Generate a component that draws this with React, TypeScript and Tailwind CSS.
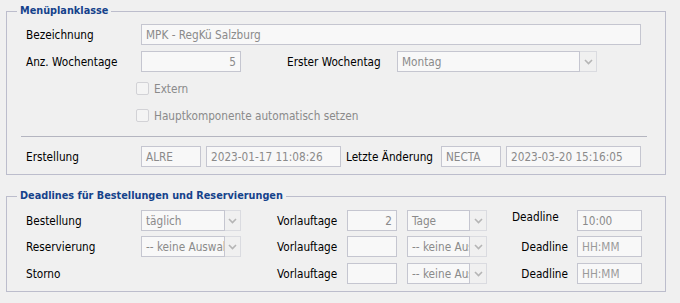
import React from "react";

const font = "[font-family:'DejaVu_Sans_Condensed','Liberation_Sans',sans-serif]";

function Field({ value, w, right, placeholder }: { value?: string; w: string; right?: boolean; placeholder?: boolean }) {
  return (
    <div
      className={`${w} h-[21px] shrink-0 border border-[#c5c6d0] bg-[#f8f8f8] flex items-center px-[4px] overflow-hidden whitespace-nowrap text-[#8a8a8a] ${right ? "justify-end" : ""} ${placeholder ? "text-[#9a9a9a]" : ""}`}
    >
      {value}
    </div>
  );
}

function Select({ value, w, trigger = "w-[17px]" }: { value: string; w: string; trigger?: string }) {
  return (
    <div className={`${w} h-[21px] shrink-0 flex`}>
      <div className="flex-1 min-w-0 border border-[#c5c6d0] bg-[#f8f8f8] flex items-center px-[4px] overflow-hidden whitespace-nowrap text-[#8a8a8a]">
        {value}
      </div>
      <div className={`${trigger} shrink-0 border border-l-0 border-[#dadbe0] bg-[#f0f0f0] flex items-center justify-center`}>
        <svg width="9" height="6" viewBox="0 0 9 6">
          <path d="M1 1 L4.5 4.5 L8 1" fill="none" stroke="#b5b5b5" strokeWidth="1.6" />
        </svg>
      </div>
    </div>
  );
}

function Check({ label }: { label: string }) {
  return (
    <div className="h-[21px] flex items-center pl-[110px] text-[#8a8a8a]">
      <div className="w-[13px] h-[13px] rounded-[2px] border border-[#d2d2d6] bg-[#f4f4f4] mr-[5px]" />
      {label}
    </div>
  );
}

export default function App() {
  return (
    <div className={`w-[680px] h-[303px] bg-[#f0f0f0] text-[11.7px] leading-[14px] text-black pl-[6px] pt-[3px] ${font}`}>
      {/* Menüplanklasse */}
      <fieldset className="w-[660px] border border-[#bcbdcc] pb-[7px]">
        <legend className="ml-[10px] px-[3px] font-bold text-[10.8px] text-[#15428b] leading-[16px]">Menüplanklasse</legend>
        <div className="flex flex-col gap-[6px] pt-[5px] pl-[19px]">
          <div className="flex items-center h-[21px]">
            <div className="w-[115px]">Bezeichnung</div>
            <Field value="MPK - RegKü Salzburg" w="w-[500px]" />
          </div>
          <div className="flex items-center h-[21px]">
            <div className="w-[115px]">Anz. Wochentage</div>
            <Field value="5" w="w-[100px]" right />
            <div className="w-[110px] ml-[46px]">Erster Wochentag</div>
            <Select value="Montag" w="w-[200px]" />
          </div>
          <Check label="Extern" />
          <Check label="Hauptkomponente automatisch setzen" />
        </div>
        <div className="ml-[14px] w-[626px] h-px bg-[#b4b5c0] mt-[10px] mb-[9px]" />
        <div className="flex items-center h-[21px] pl-[19px]">
          <div className="w-[115px]">Erstellung</div>
          <Field value="ALRE" w="w-[60px]" />
          <Field value="2023-01-17 11:08:26" w="w-[135px] ml-[5px]" />
          <div className="w-[95px] ml-[5px]">Letzte Änderung</div>
          <Field value="NECTA" w="w-[60px]" />
          <Field value="2023-03-20 15:16:05" w="w-[135px] ml-[5px]" />
        </div>
      </fieldset>

      {/* Deadlines */}
      <fieldset className="w-[660px] border border-[#bcbdcc] pb-[7px] mt-[13px]">
        <legend className="ml-[10px] px-[3px] font-bold text-[10.8px] text-[#15428b] leading-[16px]">
          Deadlines für Bestellungen und Reservierungen
        </legend>
        <div className="flex flex-col pt-[6px] pl-[19px]">
          <div className="flex items-center h-[21px]">
            <div className="w-[115px]">Bestellung</div>
            <Select value="täglich" w="w-[100px]" trigger="w-[16px]" />
            <div className="w-[70px] ml-[36px]">Vorlauftage</div>
            <Field value="2" w="w-[50px]" right />
            <Select value="Tage" w="w-[80px] ml-[10px]" />
            <div className="w-[65px] ml-[25px] self-start">Deadline</div>
            <Field value="10:00" w="w-[65px]" />
          </div>
          <div className="flex items-center h-[21px] mt-[5px]">
            <div className="w-[115px]">Reservierung</div>
            <Select value="-- keine Auswahl --" w="w-[100px]" trigger="w-[16px]" />
            <div className="w-[70px] ml-[36px]">Vorlauftage</div>
            <Field w="w-[50px]" />
            <Select value="-- keine Auswahl --" w="w-[80px] ml-[10px]" />
            <div className="w-[90px] pr-[9px] text-right">Deadline</div>
            <Field value="HH:MM" w="w-[65px]" placeholder />
          </div>
          <div className="flex items-center h-[21px] mt-[6px]">
            <div className="w-[115px]">Storno</div>
            <div className="w-[100px]" />
            <div className="w-[70px] ml-[36px]">Vorlauftage</div>
            <Field w="w-[50px]" />
            <Select value="-- keine Auswahl --" w="w-[80px] ml-[10px]" />
            <div className="w-[90px] pr-[9px] text-right">Deadline</div>
            <Field value="HH:MM" w="w-[65px]" placeholder />
          </div>
        </div>
      </fieldset>
    </div>
  );
}
